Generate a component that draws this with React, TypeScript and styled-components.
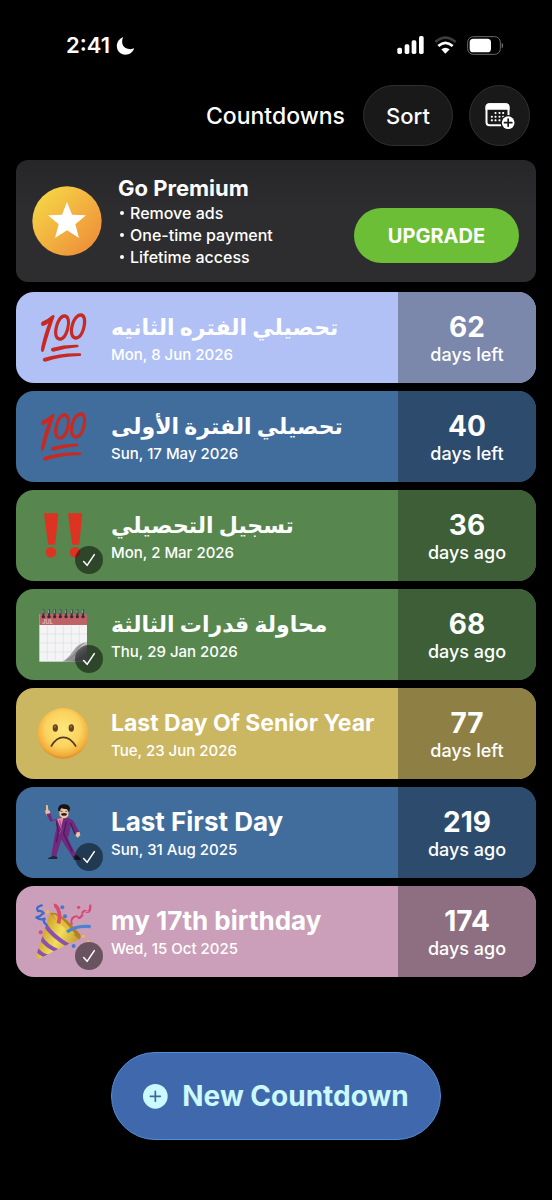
import React from "react";
import styled, { createGlobalStyle } from "styled-components";

const GlobalStyle = createGlobalStyle`
  *, *::before, *::after { box-sizing: border-box; }
  body {
    margin: 0;
    background: #000;
    color: #fff;
    font-family: Inter, "DejaVu Sans", sans-serif;
    -webkit-font-smoothing: antialiased;
  }
  button { font: inherit; color: inherit; cursor: pointer; }
  h1, h2, h3, p, ul { margin: 0; padding: 0; }
`;

const Screen = styled.div`
  min-height: 100vh;
  display: flex;
  flex-direction: column;
  padding: 0 16px 60px;
  background: #000;
`;

const StatusBar = styled.div`
  display: flex;
  align-items: center;
  justify-content: space-between;
  height: 85px;
  padding: 5px 32px 0 50px;
`;

const StatusGroup = styled.div<{ $gap: number }>`
  display: flex;
  align-items: center;
  gap: ${(p) => p.$gap}px;
`;

const Clock = styled.time`
  font-size: 22px;
  line-height: 28px;
  font-weight: 600;
`;

const NavBar = styled.header`
  display: flex;
  align-items: center;
  justify-content: flex-end;
  height: 61px;
  padding-right: 6px;
`;

const NavTitle = styled.h1`
  font-size: 23px;
  line-height: 28px;
  font-weight: 500;
  margin-right: 18px;
`;

const GlassButton = styled.button<{ $width: number }>`
  display: flex;
  align-items: center;
  justify-content: center;
  width: ${(p) => p.$width}px;
  height: 61px;
  padding: 0;
  border: 1px solid #303030;
  border-radius: 31px;
  background: #191919;
  font-size: 22px;
  line-height: 28px;
  font-weight: 500;

  & + & { margin-left: 16px; }
`;

const PremiumCard = styled.section`
  display: flex;
  align-items: center;
  gap: 16px;
  height: 122px;
  margin-top: 14px;
  padding: 0 17px 0 16px;
  border-radius: 12px;
  background: linear-gradient(#262628, #2d2d2f 40%);
`;

const PremiumCopy = styled.div`
  flex: 1;
`;

const PremiumTitle = styled.h2`
  font-size: 22px;
  line-height: 28px;
  font-weight: 700;
`;

const PremiumList = styled.ul`
  list-style: none;
  font-size: 16px;
  line-height: 22px;
  font-weight: 500;

  li {
    display: flex;
    align-items: center;
    gap: 6px;
  }

  li::before {
    content: "";
    width: 4px;
    height: 4px;
    margin-left: 2px;
    border-radius: 50%;
    background: #fff;
  }
`;

const UpgradeButton = styled.button`
  align-self: flex-end;
  width: 165px;
  height: 55px;
  margin-bottom: 19px;
  border: 0;
  border-radius: 28px;
  background: #6dbe37;
  font-size: 20px;
  line-height: 24px;
  font-weight: 700;
`;

const CardList = styled.ul`
  display: flex;
  flex-direction: column;
  gap: 8px;
  margin-top: 10px;
  list-style: none;
`;

const Card = styled.li<{ $color: string }>`
  display: flex;
  height: 91px;
  border-radius: 18px;
  overflow: hidden;
  background: ${(p) => p.$color};
`;

const CardBody = styled.div`
  flex: 1;
  min-width: 0;
  display: flex;
  align-items: center;
  gap: 16px;
  padding-left: 15px;
`;

const IconBox = styled.div`
  position: relative;
  flex: none;
  width: 64px;
  height: 64px;

  > svg { display: block; }
`;

const DoneBadge = styled.span`
  position: absolute;
  right: -8px;
  bottom: -6px;
  display: flex;
  align-items: center;
  justify-content: center;
  width: 28px;
  height: 28px;
  border-radius: 50%;
  background: rgba(0, 0, 0, 0.48);
`;

const CardText = styled.div`
  display: flex;
  flex-direction: column;
  gap: 2px;
  min-width: 0;
`;

const CardTitle = styled.h3<{ $size: number }>`
  font-size: ${(p) => p.$size}px;
  line-height: 32px;
  font-weight: 700;
  white-space: nowrap;
`;

const CardDate = styled.p`
  font-size: 15px;
  line-height: 20px;
  font-weight: 500;
`;

const DayCount = styled.div<{ $color: string }>`
  flex: none;
  display: flex;
  flex-direction: column;
  align-items: center;
  justify-content: center;
  gap: 1px;
  width: 138px;
  padding-top: 2px;
  background: ${(p) => p.$color};
`;

const DayNumber = styled.strong`
  font-size: 28px;
  line-height: 32px;
  font-weight: 700;
`;

const DayLabel = styled.span`
  font-size: 18px;
  line-height: 22px;
  font-weight: 500;
`;

const NewButton = styled.button`
  display: flex;
  align-items: center;
  justify-content: center;
  gap: 14px;
  width: 330px;
  height: 88px;
  margin: auto auto 0;
  padding: 0;
  border: 1px solid #4f8fd8;
  border-radius: 44px;
  background: #4069ad;
  color: #ccf8ff;
  font-size: 28px;
  line-height: 32px;
  font-weight: 700;
`;

const MoonIcon = () => (
  <svg width="19" height="19" viewBox="0 0 54 57" aria-hidden="true">
    <path d="M20 3C9 8 1 18 1 30c0 15 11 26 26 26 12 0 22-7 26-19-5 2-10 3-15 2C26 38 17 30 17 18c0-6 1-10 3-15z" fill="#fff" />
  </svg>
);

const SignalIcon = () => (
  <svg width="27" height="18" viewBox="0 0 81 54" fill="#fff" aria-hidden="true">
    <rect x="1" y="35" width="14" height="19" rx="5" />
    <rect x="23" y="25" width="14" height="29" rx="5" />
    <rect x="44" y="13" width="14" height="41" rx="5" />
    <rect x="66" y="0" width="14" height="54" rx="5" />
  </svg>
);

const WifiIcon = () => (
  <svg width="23" height="18" viewBox="0 0 69 54" aria-hidden="true">
    <g fill="none" strokeWidth="8">
      <path d="M4 18Q34-8 65 18" stroke="#3c3c3c" />
      <path d="M13 30q21-19 43 0" stroke="#fff" />
    </g>
    <path d="M22 40q12-10 25 0L34 53z" fill="#fff" />
  </svg>
);

const BatteryIcon = () => (
  <svg width="37" height="19" viewBox="0 0 111 57" aria-hidden="true">
    <rect x="2" y="2" width="98" height="53" rx="17" fill="none" stroke="#6b6b6b" strokeWidth="3" />
    <rect x="8" y="8" width="64" height="41" rx="11" fill="#fff" />
    <path d="M104 20c6 2 6 15 0 17z" fill="#6b6b6b" />
  </svg>
);

const CalendarPlusIcon = () => {
  const dots = [
    [29, 32], [41, 32], [52, 32],
    [18, 43], [29, 43], [41, 43], [52, 43],
    [18, 54], [29, 54], [41, 54],
  ];
  return (
    <svg width="31" height="28" viewBox="-2 0 92 84" aria-hidden="true">
      <rect x="5" y="7" width="66" height="63" rx="9" fill="none" stroke="#fff" strokeWidth="6" />
      <path d="M2 23V15Q2 4 14 4h48q12 0 12 11v8z" fill="#fff" />
      {dots.map(([x, y]) => (
        <rect key={`${x}-${y}`} x={x} y={y - 2} width="6" height="6" rx="2" fill="#fff" />
      ))}
      <circle cx="70" cy="62" r="23" fill="#191919" />
      <circle cx="70" cy="62" r="19" fill="#fff" />
      <path d="M70 51v22M59 62h22" stroke="#191919" strokeWidth="5" strokeLinecap="round" />
    </svg>
  );
};

const StarMedal = () => (
  <svg width="70" height="70" viewBox="0 0 210 210" aria-hidden="true">
    <defs>
      <linearGradient id="medal" x1="0" y1="0" x2="1" y2="1">
        <stop offset="0.1" stopColor="#f6d546" />
        <stop offset="0.9" stopColor="#ee8f39" />
      </linearGradient>
    </defs>
    <circle cx="105" cy="105" r="104" fill="url(#medal)" />
    <path d="M105 48l15 38 42 2-32 27 11 41-36-23-36 23 11-41-32-27 42-2z" fill="#fff" />
  </svg>
);

const CheckIcon = () => (
  <svg width="16" height="16" viewBox="0 0 42 42" fill="none" aria-hidden="true">
    <path d="M7 25l9 10L35 7" stroke="#fff" strokeWidth="4" strokeLinecap="round" strokeLinejoin="round" />
  </svg>
);

const PlusCircleIcon = () => (
  <svg width="25" height="25" viewBox="0 0 75 75" aria-hidden="true">
    <circle cx="37" cy="37" r="37" fill="#ccf8ff" />
    <path d="M37 22v30M22 37h30" stroke="#3a6a9c" strokeWidth="5" strokeLinecap="round" />
  </svg>
);

const EmojiFrame = ({ label, children }: { label: string; children: React.ReactNode }) => (
  <svg width="64" height="64" viewBox="0 0 192 192" role="img" aria-label={label}>
    {children}
  </svg>
);

const HundredEmoji = () => (
  <EmojiFrame label="Hundred points">
    <g fill="#c62a22" fillRule="evenodd">
      <path d="M33 47Q50 40 62 29Q69 24 71 31Q56 72 40 130Q38 140 32 137Q29 134 31 122Q40 82 52 52Q44 58 36 60Q30 60 30 54Q30 49 33 47z" />
      <path d="M103 25C118 28 120 48 114 71C108 94 97 106 84 104C70 101 66 82 72 60C78 37 90 22 103 25zM101 35C94 34 85 47 81 64C77 81 79 93 86 94C94 95 102 82 106 65C110 49 108 36 101 35z" />
      <path d="M151 22C166 24 169 45 163 67C157 90 145 103 132 101C118 98 113 79 119 57C125 35 138 20 151 22zM149 32C141 32 132 44 128 61C124 78 127 90 134 91C142 92 151 79 154 62C158 45 156 33 149 32z" />
      <path d="M62 126Q100 115 139 116Q146 119 140 124Q104 126 67 137Q56 136 62 126z" />
      <path d="M38 156Q90 140 147 142Q154 145 148 150Q92 151 43 167Q31 166 38 156z" />
    </g>
  </EmojiFrame>
);

const DoubleBangEmoji = () => (
  <EmojiFrame label="Double exclamation mark">
    <g fill="#dd3322">
      <path d="M39 28h43l-9 91q-1 3-4 3H55q-3 0-4-3z" />
      <circle cx="60" cy="145" r="16" />
      <path d="M111 28h43l-9 91q-1 3-4 3h-14q-3 0-4-3z" />
      <circle cx="132" cy="145" r="16" />
    </g>
  </EmojiFrame>
);

const CalendarEmoji = () => (
  <EmojiFrame label="Spiral calendar">
    <defs>
      <linearGradient id="curl" x1="0.25" y1="0.25" x2="0.75" y2="0.8">
        <stop offset="0" stopColor="#6d6d6f" />
        <stop offset="0.35" stopColor="#e2e2e4" />
        <stop offset="0.65" stopColor="#9a9a9e" />
        <stop offset="1" stopColor="#77797b" />
      </linearGradient>
    </defs>
    <rect x="25" y="33" width="143" height="143" fill="#f4f4f6" />
    <path d="M25 93h143M25 120h143M25 147h143M49 66v110M73 66v110M97 66v110M121 66v110M145 66v110" stroke="#dedee3" strokeWidth="2" fill="none" />
    <rect x="25" y="33" width="143" height="33" fill="#bd6267" />
    <text x="34" y="63" fontSize="17" fontWeight="500" fill="#f1cfd0" fontFamily="Inter, sans-serif">JUL</text>
    <path d="M95 176Q124 164 137 140Q146 121 168 117V176z" fill="url(#curl)" />
    <path d="M95 176Q118 159 127 143Q142 120 168 117Q146 128 139 146Q128 169 95 176z" fill="#767678" opacity="0.65" />
    {[37, 54, 71, 88, 105, 122, 139, 156].map((x) => (
      <g key={x}>
        <circle cx={x} cy="41" r="5" fill="#42262a" />
        <rect x={x - 3} y="18" width="6" height="21" rx="3" fill="#343a40" />
        <path d={`M${x - 1} 20v11`} stroke="#d7e3e6" strokeWidth="2" />
      </g>
    ))}
  </EmojiFrame>
);

const FrownEmoji = () => (
  <EmojiFrame label="Frowning face">
    <defs>
      <radialGradient id="face" cx="0.5" cy="0.42" r="0.58">
        <stop offset="0" stopColor="#fde77c" />
        <stop offset="0.6" stopColor="#fbd35e" />
        <stop offset="0.88" stopColor="#f3ae3c" />
        <stop offset="1" stopColor="#dc8b27" />
      </radialGradient>
    </defs>
    <circle cx="96" cy="94" r="76" fill="url(#face)" />
    <ellipse cx="73" cy="78" rx="8" ry="11" fill="#674220" />
    <ellipse cx="121" cy="78" rx="8" ry="11" fill="#674220" />
    <circle cx="72" cy="74" r="3" fill="#9b7348" />
    <circle cx="120" cy="74" r="3" fill="#9b7348" />
    <path d="M61 132Q76 106 97 106Q118 106 134 132" fill="none" stroke="#563a20" strokeWidth="5" strokeLinecap="round" />
  </EmojiFrame>
);

const DancerEmoji = () => (
  <EmojiFrame label="Man dancing">
    <path d="M45 12l5 0 2 14 6 6-3 12-9-1-4-12 3-5z" fill="#e9bd9c" />
    <path d="M46 39l12-2 7 20 27-8 22 2 13 8 21 40-9 5-20-30-4 26-5 12 30 58-13 2-36-56-17 56-14-2 11-66 6-24-2-23-17 5z" fill="#72287d" />
    <path d="M76 61l6 31-6 32M106 61l-8 36 26 55M118 66l14 34" fill="none" stroke="#4d1a60" strokeWidth="4" />
    <path d="M78 54l20-5-9 33z" fill="#e78daa" />
    <path d="M86 57l6 28-8 14" fill="none" stroke="#aa3f84" strokeWidth="3" />
    <path d="M84 22q14-14 29 0l-1 22q-12 16-26 0z" fill="#efc5a3" />
    <path d="M81 29q-1-18 16-19 19-1 20 13l-3 11-6-9q-12-1-18-3l-3 9z" fill="#171314" />
    <path d="M88 31h7M103 31h6M91 39q7-4 16 0l-2 4H93z" stroke="#251817" strokeWidth="2" fill="#251817" />
    <path d="M137 94l9-1 2 10-8 7-6-6z" fill="#efc5a3" />
    <path d="M67 165l12 2v7H50q2-5 17-9M127 165l13-2 9 10v5l-21-2z" fill="#202638" />
  </EmojiFrame>
);

const PopperEmoji = () => (
  <EmojiFrame label="Party popper">
    <defs>
      <linearGradient id="cone" x1="0" y1="0.3" x2="1" y2="0.8">
        <stop offset="0.1" stopColor="#c99a22" />
        <stop offset="0.5" stopColor="#f1df5c" />
        <stop offset="1" stopColor="#b98924" />
      </linearGradient>
      <clipPath id="coneShape">
        <path d="M57 39Q83 75 146 118Q93 140 30 174Q18 180 15 168z" />
      </clipPath>
    </defs>
    <path d="M57 39Q90 32 147 103Q153 116 142 119Q90 101 57 39" fill="#b18124" />
    <path d="M64 42Q92 47 133 104Q95 98 64 42" fill="#e6b942" />
    <path d="M57 39Q83 75 146 118Q93 140 30 174Q18 180 15 168z" fill="url(#cone)" />
    <g clipPath="url(#coneShape)" fill="none" stroke="#8b50b2" strokeWidth="12">
      <path d="M42 74Q64 109 113 137" />
      <path d="M29 112Q44 139 81 153" />
      <path d="M14 143Q25 162 51 170" />
    </g>
    <path d="M82 70Q89 48 82 30Q77 16 69 17" fill="none" stroke="#dc4b6d" strokeWidth="11" />
    <path d="M108 96Q135 75 179 80" fill="none" stroke="#4a84d1" strokeWidth="10" />
    <g fill="none" strokeLinecap="round" strokeLinejoin="round">
      <path d="M32 16Q12 21 21 33Q33 31 38 39Q28 50 16 52Q28 62 41 56Q34 65 46 74" stroke="#3e69c8" strokeWidth="7" />
      <path d="M122 71Q119 50 137 49Q145 60 154 45Q154 28 168 35Q178 38 178 17" stroke="#d34874" strokeWidth="7" />
      <path d="M124 67Q129 48 140 54M156 43Q162 30 171 34" stroke="#f291ad" strokeWidth="3" />
    </g>
    <g fill="#4979cb">
      <circle cx="94" cy="22" r="6" />
      <circle cx="102" cy="49" r="6" />
      <circle cx="128" cy="138" r="6" />
    </g>
    <g fill="#d94c78">
      <circle cx="143" cy="22" r="5" />
      <circle cx="29" cy="97" r="6" />
    </g>
    <g fill="#edbd3f">
      <circle cx="49" cy="36" r="5" />
      <circle cx="157" cy="109" r="5" />
      <circle cx="172" cy="124" r="4" />
    </g>
  </EmojiFrame>
);

interface Countdown {
  title: string;
  size: number;
  arabic?: boolean;
  date: string;
  days: number;
  past: boolean;
  color: string;
  shade: string;
  Icon: React.ComponentType;
}

const countdowns: Countdown[] = [
  { title: "تحصيلي الفتره الثانيه", size: 22, arabic: true, date: "Mon, 8 Jun 2026", days: 62, past: false, color: "#b1c1f6", shade: "#7c87ac", Icon: HundredEmoji },
  { title: "تحصيلي الفترة الأولى", size: 22, arabic: true, date: "Sun, 17 May 2026", days: 40, past: false, color: "#416d9d", shade: "#2d4c6d", Icon: HundredEmoji },
  { title: "تسجيل التحصيلي", size: 22, arabic: true, date: "Mon, 2 Mar 2026", days: 36, past: true, color: "#57874f", shade: "#3d5e37", Icon: DoubleBangEmoji },
  { title: "محاولة قدرات الثالثة", size: 22, arabic: true, date: "Thu, 29 Jan 2026", days: 68, past: true, color: "#57874f", shade: "#3d5e37", Icon: CalendarEmoji },
  { title: "Last Day Of Senior Year", size: 23, date: "Tue, 23 Jun 2026", days: 77, past: false, color: "#cbb661", shade: "#8e7f44", Icon: FrownEmoji },
  { title: "Last First Day", size: 26, date: "Sun, 31 Aug 2025", days: 219, past: true, color: "#416d9d", shade: "#2d4c6d", Icon: DancerEmoji },
  { title: "my 17th birthday", size: 26, date: "Wed, 15 Oct 2025", days: 174, past: true, color: "#cb9fb9", shade: "#8e6f81", Icon: PopperEmoji },
];

const CountdownCard = ({ item }: { item: Countdown }) => (
  <Card $color={item.color}>
    <CardBody>
      <IconBox>
        <item.Icon />
        {item.past && (
          <DoneBadge>
            <CheckIcon />
          </DoneBadge>
        )}
      </IconBox>
      <CardText>
        <CardTitle $size={item.size} lang={item.arabic ? "ar" : "en"}>
          <bdi>{item.title}</bdi>
        </CardTitle>
        <CardDate>{item.date}</CardDate>
      </CardText>
    </CardBody>
    <DayCount $color={item.shade}>
      <DayNumber>{item.days}</DayNumber>
      <DayLabel>{item.past ? "days ago" : "days left"}</DayLabel>
    </DayCount>
  </Card>
);

export default function App() {
  return (
    <>
      <GlobalStyle />
      <Screen>
        <StatusBar>
          <StatusGroup $gap={6}>
            <Clock>2:41</Clock>
            <MoonIcon />
          </StatusGroup>
          <StatusGroup $gap={10}>
            <SignalIcon />
            <WifiIcon />
            <BatteryIcon />
          </StatusGroup>
        </StatusBar>
        <NavBar>
          <NavTitle>Countdowns</NavTitle>
          <GlassButton type="button" $width={90}>Sort</GlassButton>
          <GlassButton type="button" $width={61} aria-label="Add calendar">
            <CalendarPlusIcon />
          </GlassButton>
        </NavBar>
        <PremiumCard>
          <StarMedal />
          <PremiumCopy>
            <PremiumTitle>Go Premium</PremiumTitle>
            <PremiumList>
              <li>Remove ads</li>
              <li>One-time payment</li>
              <li>Lifetime access</li>
            </PremiumList>
          </PremiumCopy>
          <UpgradeButton type="button">UPGRADE</UpgradeButton>
        </PremiumCard>
        <CardList>
          {countdowns.map((item) => (
            <CountdownCard key={item.title} item={item} />
          ))}
        </CardList>
        <NewButton type="button">
          <PlusCircleIcon />
          New Countdown
        </NewButton>
      </Screen>
    </>
  );
}
